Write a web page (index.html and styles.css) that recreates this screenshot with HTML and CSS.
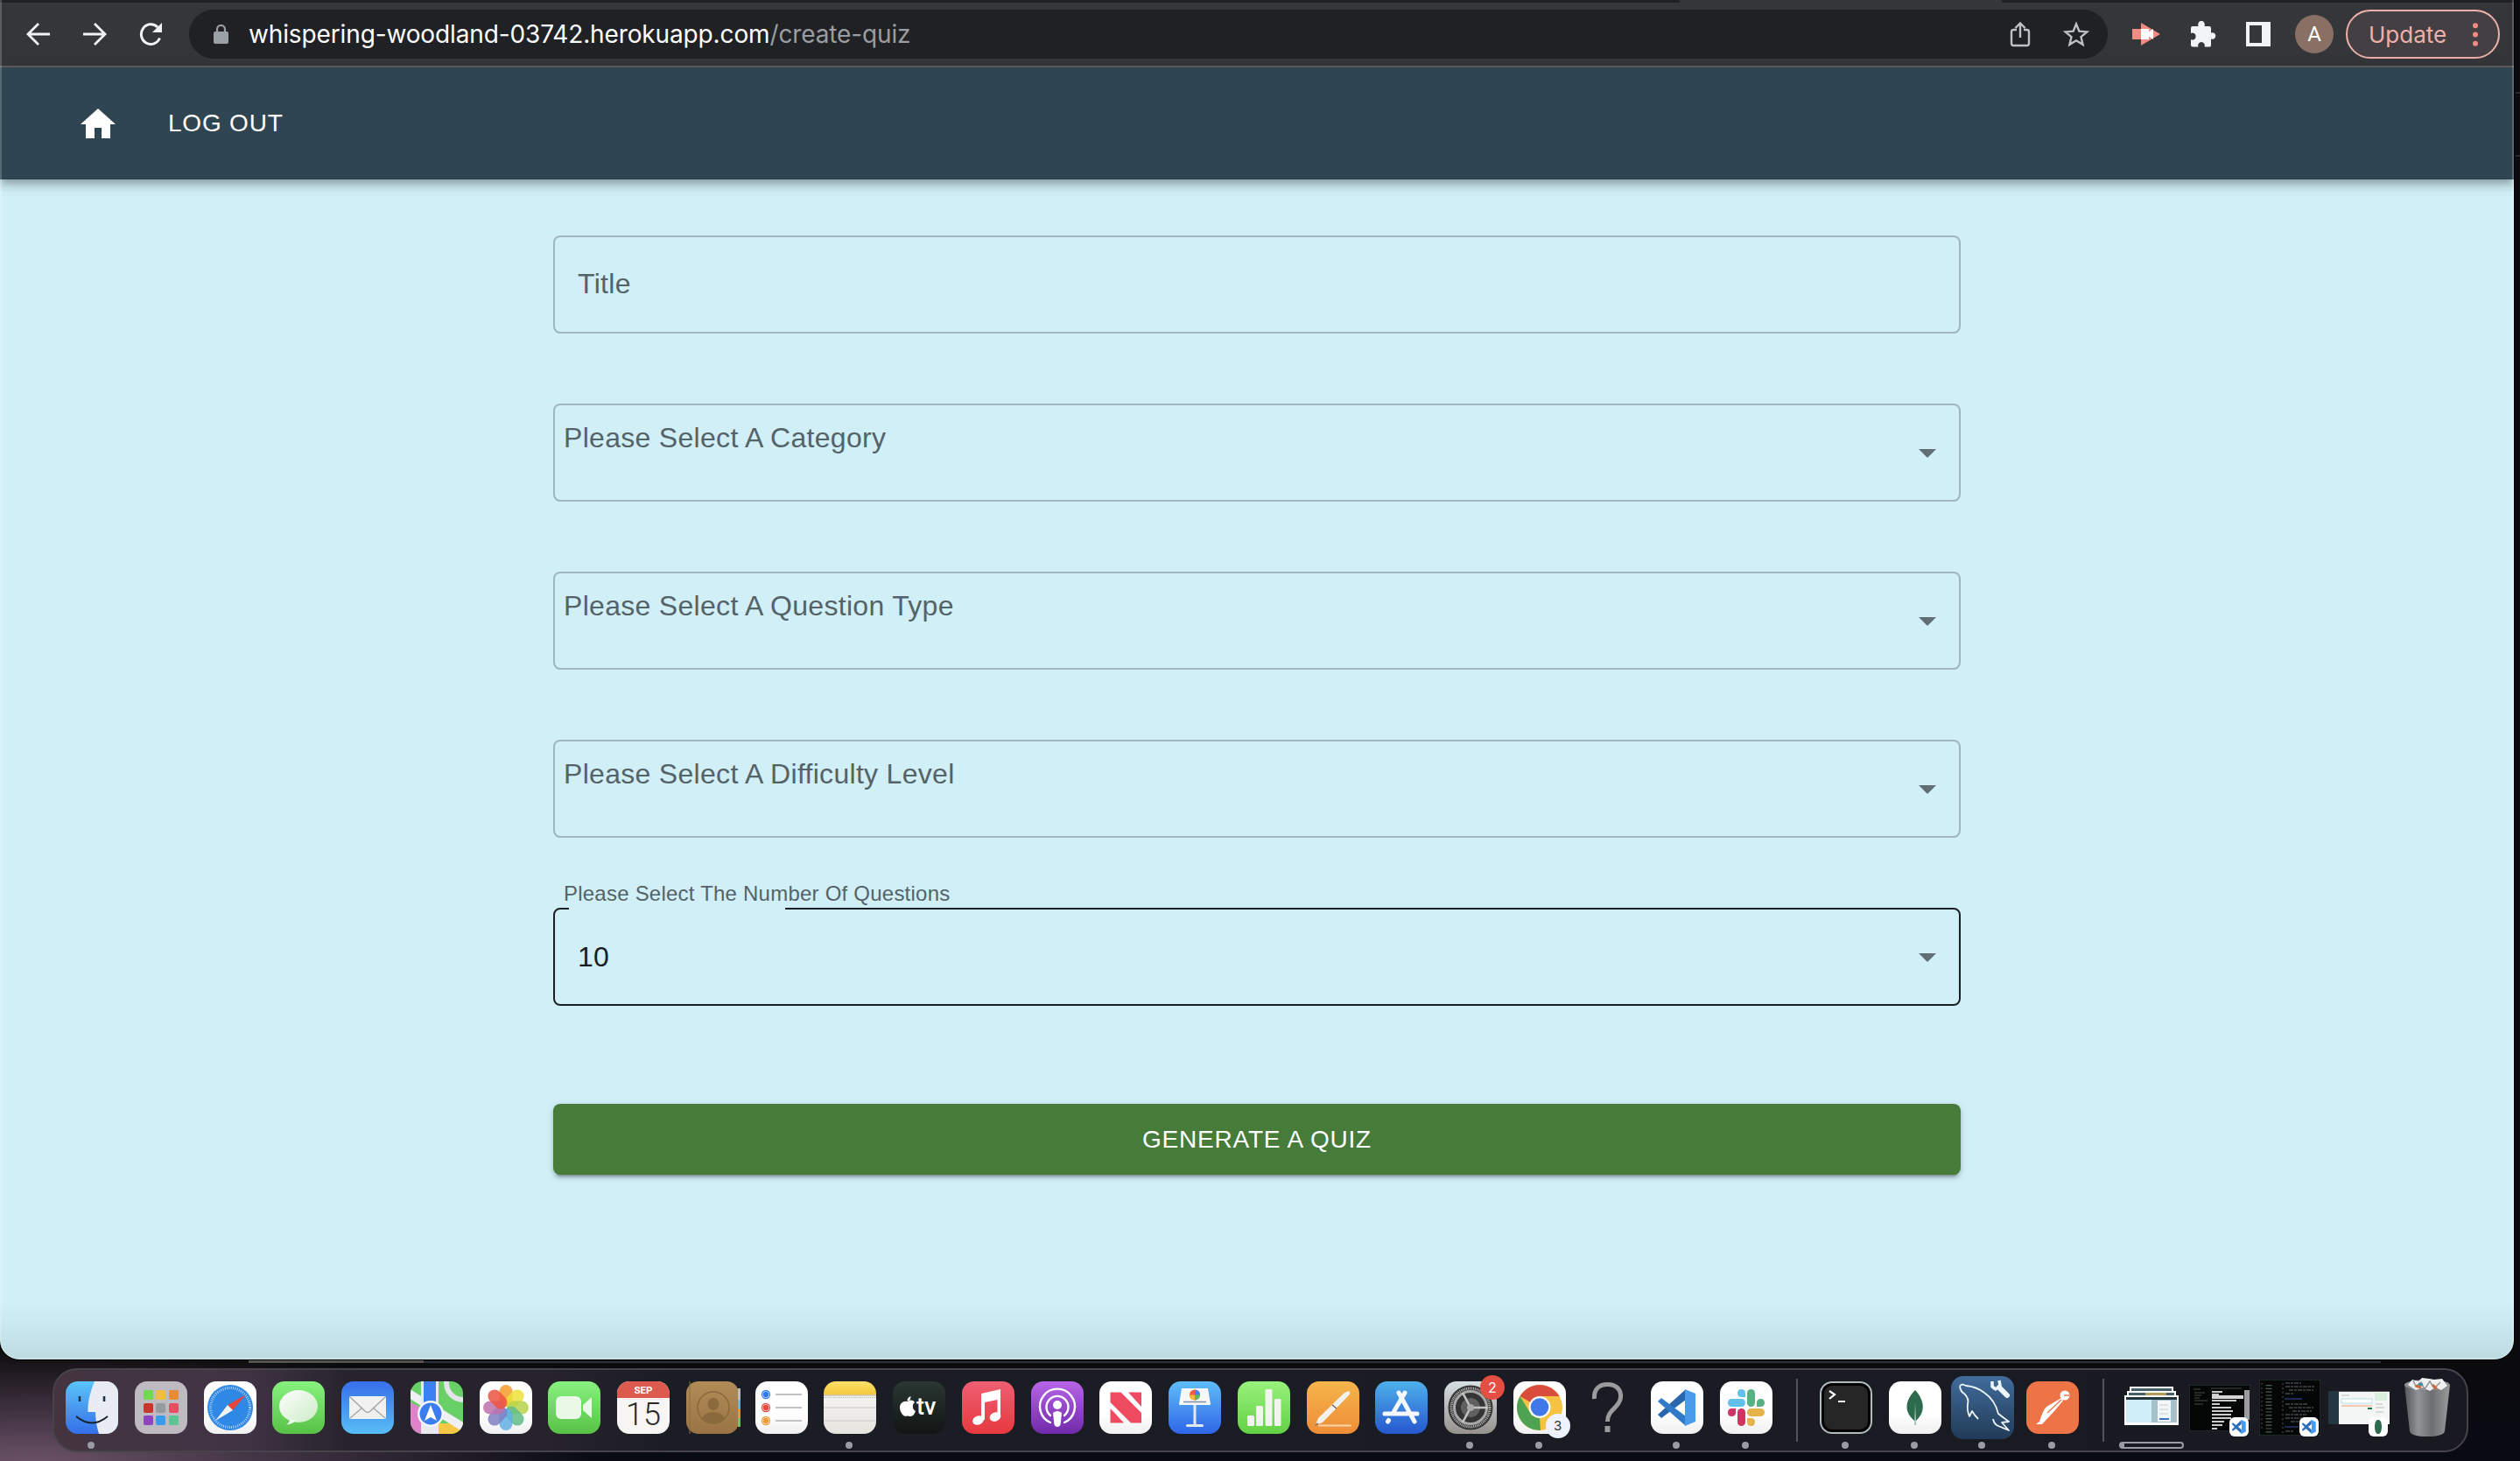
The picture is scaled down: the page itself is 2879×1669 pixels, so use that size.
FILE: index.html
```html
<!DOCTYPE html>
<html lang="en">
<head>
<meta charset="utf-8">
<title>Create Quiz</title>
<link rel="stylesheet" href="styles.css">
</head>
<body>
<div class="desktop">
  <div class="window">
    <div class="tabstrip"><span class="active-tab"></span></div>
    <div class="toolbar">
      <div class="nav-icons">
        <svg width="28" height="26" viewBox="0 0 28 26" fill="none" stroke="#f1f3f4" stroke-width="2.8"><path d="M27 13H2M14 1L2 13l12 12"/></svg>
        <svg width="28" height="26" viewBox="0 0 28 26" fill="none" stroke="#f1f3f4" stroke-width="2.8"><path d="M1 13h25M14 1l12 12-12 12"/></svg>
        <svg width="28" height="26" viewBox="0 0 28 26"><path d="M24.500 17.500A11 11.300 0 1 1 22 5" fill="none" stroke="#f1f3f4" stroke-width="3"/><path d="M27 0v11H16z" fill="#f1f3f4"/></svg>
      </div>
      <div class="omnibox">
        <svg width="17" height="22" viewBox="0 0 17 22"><rect y="8" width="17" height="14" rx="2" fill="#9aa0a6"/><path d="M4 9V5.500a4.500 4.500 0 0 1 9 0V9" fill="none" stroke="#9aa0a6" stroke-width="2.200"/></svg>
        <span class="url">whispering-woodland-03742.herokuapp.com<span class="path">/create-quiz</span></span>
        <svg class="share" width="24" height="30" viewBox="0 0 24 30" fill="none" stroke="#bdc1c6" stroke-width="2.400"><path d="M8 10H4.500Q2 10 2 12.500v13Q2 28 4.500 28h15q2.500 0 2.500-2.500v-13Q22 10 19.500 10H16M12 19V3M6.500 8L12 2.500 17.500 8"/></svg>
        <svg width="30" height="30" viewBox="0 0 30 30" fill="none" stroke="#bdc1c6" stroke-width="2.400"><path d="M15 3.500l3.400 8.200 8.900.7-6.800 5.800 2.100 8.700L15 22.300l-7.600 4.600 2.100-8.700-6.800-5.800 8.900-.7z"/></svg>
      </div>
      <div class="extensions">
        <svg width="32" height="28" viewBox="0 0 32 28"><path d="M0 8h10V1l22 13-22 13v-7H0z" fill="#f28b82"/><path d="M10 8h9v12h-9z" fill="#fff"/><path d="M18 12l6-4v12l-6-4z" fill="#fff"/></svg>
        <svg width="30" height="30" viewBox="0 0 30 30"><path d="M3 6h6.500a3.800 4.500 0 1 1 7 0H22q2 0 2 2v5.500a3.800 3.800 0 1 1 0 7V28q0 1.500-2 1.500h-5.500a3.800 4 0 1 0-7 0H3q-2 0-2-2V21a3.800 4 0 1 0 0-7V8q0-2 2-2z" fill="#f1f3f4"/></svg>
        <svg width="28" height="28" viewBox="0 0 28 28"><path fill-rule="evenodd" d="M0 0h28v28H0zM4 4v20h14V4z" fill="#f1f3f4"/></svg>
      </div>
      <span class="avatar">A</span>
      <div class="update"><span>Update</span><svg width="6" height="27" viewBox="0 0 6 27" fill="#f28b82"><circle cx="3" cy="3.200" r="3"/><circle cx="3" cy="13.500" r="3"/><circle cx="3" cy="23.800" r="3"/></svg></div>
    </div>

    <header class="appbar">
      <svg width="40" height="34" viewBox="2 3 20 17"><path d="M10 20v-6h4v6h5v-8h3L12 3 2 12h3v8z" fill="#fff"/></svg>
      <a class="logout">LOG OUT</a>
    </header>

    <main class="form">
      <div class="field title"><span class="label">Title</span></div>
      <div class="field"><span class="label">Please Select A Category</span><i class="arrow"></i></div>
      <div class="field"><span class="label">Please Select A Question Type</span><i class="arrow"></i></div>
      <div class="field"><span class="label">Please Select A Difficulty Level</span><i class="arrow"></i></div>
      <div class="field active"><span class="caption">Please Select The Number Of Questions</span><i class="notch"></i><span class="value">10</span><i class="arrow"></i></div>
      <button class="generate">GENERATE A QUIZ</button>
    </main>
  </div>

  <nav class="dock">
    <div class="cell running"><div class="tile finder"><svg viewBox="0 0 60 60"><path d="M33 0C28 12 25 24 25.500 35H34q0 12 4 25h22V0z" fill="#e9edf3"/><path d="M16 17v6M44 17v6" stroke="#17344c" stroke-width="2.600"/><path d="M12 40q18 15 36 0" fill="none" stroke="#182028" stroke-width="1.800"/></svg></div></div>
    <div class="cell"><div class="tile launchpad"><i></i><i></i><i></i><i></i><i></i><i></i><i></i><i></i><i></i></div></div>
    <div class="cell"><div class="tile white"><svg viewBox="0 0 60 60"><circle cx="30" cy="30" r="26" fill="#2f87e6"/><circle cx="30" cy="30" r="22.500" fill="none" stroke="#c8e3fb" stroke-width="3" stroke-dasharray=".8 1.560"/><path d="M48 15L27 27l6 6z" fill="#e8453c"/><path d="M13 45l14-18 6 6z" fill="#f2f4f6"/></svg></div></div>
    <div class="cell"><div class="tile green"><svg viewBox="0 0 60 60"><defs><linearGradient id="bubble" x2="1" y2="1"><stop stop-color="#fff"/><stop offset="1" stop-color="#c9ecc3"/></linearGradient></defs><ellipse cx="30" cy="28.500" rx="22" ry="18.500" fill="url(#bubble)"/><path d="M20 43q0 4-4 6.500 7-.5 11-5z" fill="#effbec"/></svg></div></div>
    <div class="cell"><div class="tile mail"><svg viewBox="0 0 60 60"><rect x="9" y="17" width="42" height="26" rx="2" fill="#f1f1f1"/><path d="M10 18l17 16q3 3 6 0l17-16M10 42l14-12M50 42L36 30" fill="none" stroke="#a4a4a4" stroke-width="1.300"/></svg></div></div>
    <div class="cell"><div class="tile maps"><svg viewBox="0 0 60 60"><path d="M0 24l18 10v26H0z" fill="#de83c9"/><path d="M32 48l28 0v12H32z" fill="#f6c846"/><path d="M-2 8l64 40v11L-2 19z" fill="#f0f0f4"/><path d="M12 0h20v60H12z" fill="#e9eaef"/><path d="M15 0h14v30H15z" fill="#3d80f2"/><circle cx="60" cy="2" r="19" fill="none" stroke="#e2e4e8" stroke-width="6"/><circle cx="23" cy="37" r="15" fill="#f4f5fa"/><circle cx="23" cy="37" r="12.500" fill="#3b7df0"/><path d="M23 27l7 18-7-4-7 4z" fill="#fff"/></svg></div></div>
    <div class="cell"><div class="tile white"><svg viewBox="0 0 60 60" fill-opacity=".85"><rect x="22.500" y="4" width="15" height="25" rx="7.500" fill="#f49b2a"/><rect x="22.500" y="4" width="15" height="25" rx="7.500" fill="#efe13b" transform="rotate(45 30 30)"/><rect x="22.500" y="4" width="15" height="25" rx="7.500" fill="#b7d44a" transform="rotate(90 30 30)"/><rect x="22.500" y="4" width="15" height="25" rx="7.500" fill="#62bd87" transform="rotate(135 30 30)"/><rect x="22.500" y="4" width="15" height="25" rx="7.500" fill="#62b0e4" transform="rotate(180 30 30)"/><rect x="22.500" y="4" width="15" height="25" rx="7.500" fill="#7f80c4" transform="rotate(225 30 30)"/><rect x="22.500" y="4" width="15" height="25" rx="7.500" fill="#bd71ac" transform="rotate(270 30 30)"/><rect x="22.500" y="4" width="15" height="25" rx="7.500" fill="#ec5340" transform="rotate(315 30 30)"/></svg></div></div>
    <div class="cell"><div class="tile green"><svg viewBox="0 0 60 60" fill="#eaf8e8"><rect x="9" y="17" width="29" height="26" rx="6"/><path d="M40 27l10-9v24l-10-9z"/></svg></div></div>
    <div class="cell"><div class="tile calendar"><b>SEP</b><span>15</span></div></div>
    <div class="cell"><div class="tile contacts"><svg viewBox="0 0 60 60"><path d="M4 0v60" stroke="#8a6a3c"/><circle cx="31" cy="30" r="18" fill="none" stroke="#8a6a3c" stroke-width="1.500"/><ellipse cx="31" cy="26" rx="6.500" ry="7" fill="#8a6a3c"/><path d="M18 42q4-7 13-7t13 7q-6 6-13 6t-13-6z" fill="#8a6a3c"/></svg><i class="tabs"></i></div></div>
    <div class="cell"><div class="tile white"><svg viewBox="0 0 60 60"><g stroke="#c2c2c2" stroke-width="1.800"><path d="M23 15h30M23 30h30M23 45h30"/></g><g fill="none" stroke-width="1.300"><circle cx="12" cy="15" r="4.500" stroke="#2e78f0"/><circle cx="12" cy="30" r="4.500" stroke="#e8483e"/><circle cx="12" cy="45" r="4.500" stroke="#ee9a35"/></g><circle cx="12" cy="15" r="3.200" fill="#2e78f0"/><circle cx="12" cy="30" r="3.200" fill="#e8483e"/><circle cx="12" cy="45" r="3.200" fill="#ee9a35"/></svg></div></div>
    <div class="cell running"><div class="tile notes"><svg viewBox="0 0 60 60"><path d="M0 16h60" stroke="#b2aea0"/><path d="M0 18.500h60" stroke="#aaa" stroke-dasharray="1 1.200"/><path d="M0 30h60M0 45h60" stroke="#d4d4d0" stroke-width="1.500"/></svg></div></div>
    <div class="cell"><div class="tile tv"><svg viewBox="0 0 60 60"><path d="M17 23c2-2 6-2 8 1-3 2-3 8 1 10-1 3-3 6-6 6-2 0-3-1-5 0-3 0-7-5-7-10s4-8 9-7zM16.500 22c0-2 1-4 4-5 0 3-1 5-4 5z" fill="#fff"/></svg><span>tv</span></div></div>
    <div class="cell"><div class="tile music"><svg viewBox="0 0 60 60" fill="#fff"><path d="M22 14l22-5v32h-3.500V21L26 24v20h-4z"/><ellipse cx="18.500" cy="44.500" rx="6.500" ry="5" transform="rotate(-20 18.500 44.500)"/><ellipse cx="38" cy="40.500" rx="6.500" ry="5" transform="rotate(-20 38 40.500)"/></svg></div></div>
    <div class="cell"><div class="tile podcasts"><svg viewBox="0 0 60 60"><g fill="none" stroke="#fff" stroke-width="2.400" stroke-linecap="round"><path d="M22 47a20 20 0 1 1 16 0"/><path d="M22 39a12.500 12.500 0 1 1 16 0"/></g><circle cx="30" cy="27" r="5" fill="#fff"/><path d="M25 36q5-4 10 0l-1.500 14q-3.500 4-7 0z" fill="#fff"/></svg></div></div>
    <div class="cell"><div class="tile white"><svg viewBox="0 0 60 60" fill="#ee4b60"><path d="M12.500 12.500h12L48 36v11.500H36L12.500 24zM33 12.500h15V29zM12.500 31v16.500H28z"/></svg></div></div>
    <div class="cell"><div class="tile keynote"><svg viewBox="0 0 60 60"><path d="M28.500 26h3v24h-3z" fill="#e4e9ef"/><rect x="20" y="49" width="20" height="3" rx="1.500" fill="#e4e9ef"/><path d="M15 8h30l3 18q0 1-1 1H13q-1 0-1-1z" fill="#f7f8fa"/><path d="M17 23.500h26" stroke="#7c8ca2" stroke-width="1.500"/><circle cx="30" cy="15.500" r="6" fill="#ee5a48"/><path d="M30 15.500v-6a6 6 0 0 1 6 6z" fill="#3c84e8"/><path d="M30 15.500h6a6 6 0 0 1-6 6z" fill="#54c057"/><path d="M30 15.500v6a6 6 0 0 1-6-6z" fill="#f5b838"/></svg></div></div>
    <div class="cell"><div class="tile numbers"><svg viewBox="0 0 60 60" fill="#f1f4ef"><rect x="11" y="39" width="8" height="12" rx="1.500"/><rect x="21" y="28" width="8" height="23" rx="1.500"/><rect x="31.500" y="9" width="8" height="42" rx="1.500"/><rect x="42" y="20" width="7.500" height="31" rx="1.500"/></svg></div></div>
    <div class="cell"><div class="tile pages"><svg viewBox="0 0 60 60"><path d="M14 50.500h36" stroke="#fbd6ab" stroke-width="2" stroke-linecap="round"/><path d="M10 50l3-8L43 13q5-3 6-1 1 2-3 6L18 47z" fill="#f3f1ee"/><path d="M29 27l5 4M10 50l3-2" stroke="#6d5b4b" stroke-width="1.300"/></svg></div></div>
    <div class="cell"><div class="tile appstore"><svg viewBox="0 0 60 60" fill="none" stroke="#f5f8ff" stroke-width="5" stroke-linecap="round"><path d="M34 13L20 37M27 13l18 33M11 37h37M15.500 44.500l-1 1.500"/></svg></div></div>
    <div class="cell running"><div class="tile settings"><svg viewBox="0 0 60 60"><circle cx="30" cy="30" r="25.500" fill="#343434"/><circle cx="30" cy="30" r="22" fill="none" stroke="#b9bab7" stroke-width="3" stroke-dasharray="1 1"/><circle cx="30" cy="30" r="18.500" fill="none" stroke="#a7a9a6" stroke-width="3"/><circle cx="30" cy="30" r="11" fill="#606060"/><path d="M31 30h19M30 30l-9-17M30 30l-9 17" stroke="#c2c4c1" stroke-width="2.600"/><circle cx="30" cy="30" r="4" fill="#a7a9a6"/></svg></div><b class="badge">2</b></div>
    <div class="cell running"><div class="tile white"><svg viewBox="0 0 60 60"><circle cx="30" cy="30" r="26" fill="#f5c242"/><path d="M30 30L7.500 17A26 26 0 0 1 52.500 17H30z" fill="#da4d3c"/><path d="M7.500 17L21 39l9 2 1 15A26 26 0 0 1 7.500 17z" fill="#4ea352"/><circle cx="30" cy="29.500" r="12.500" fill="#fff"/><circle cx="30" cy="29.500" r="10.300" fill="#4078ea"/></svg></div><b class="count">3</b></div>
    <div class="cell"><div class="tile question"><svg viewBox="0 0 60 60"><path d="M13.500 20C12.500 8 20 3.500 28.500 3.500c10 0 16 6 15 15-1 12-15 13-15 27.500" fill="none" stroke="#9b9b9d" stroke-width="5"/><path d="M25.500 51h6v7h-6z" fill="#9b9b9d"/></svg></div></div>
    <div class="cell running"><div class="tile white"><svg viewBox="0 0 60 60"><path d="M8 38l4 4 28-21V9z" fill="#2a66ad"/><path d="M8 23l4-4 28 21v11z" fill="#3179c9"/><path d="M39 9l12 5v32l-12 5z" fill="#4a9bea"/></svg></div></div>
    <div class="cell running"><div class="tile white"><svg viewBox="0 0 60 60"><g fill="#62c1ea"><rect x="9" y="20" width="20" height="9" rx="4.500"/><path d="M29 18h-5a4.500 4.500 0 1 1 5-5z"/></g><g fill="#56b183"><rect x="31" y="9" width="9" height="20" rx="4.500"/><path d="M42 29v-5a4.500 4.500 0 1 1 5 5z"/></g><g fill="#e4b34b"><rect x="31" y="31" width="20" height="9" rx="4.500"/><path d="M31 42h5a4.500 4.500 0 1 1-5 5z"/></g><g fill="#cf3462"><rect x="20" y="31" width="9" height="20" rx="4.500"/><path d="M18 31v5a4.500 4.500 0 1 1-5-5z"/></g></svg></div></div>
    <i class="divider"></i>
    <div class="cell running"><div class="tile terminal"><svg viewBox="0 0 60 60" fill="none" stroke="#fff" stroke-width="2.200"><path d="M11 11l6 4-6 5M21 23h8"/></svg></div></div>
    <div class="cell running"><div class="tile white"><svg viewBox="0 0 60 60"><path d="M30 10C18 22 17 35 29 45h2c11-10 10-23-1-35z" fill="#2c6b4d"/><path d="M30 24l1.300 26h-2.200z" fill="#a8c6b2"/></svg></div></div>
    <div class="cell running wide"><div class="tile mysql"><svg viewBox="0 0 72 72" fill="none" stroke="#edf5fb" stroke-width="1.800" stroke-linejoin="round"><path d="M10 12q1-4 7-1 12 1 21 8 12 8 16 24l12 9-8 1 8 9-12-5q-5-2-6-8"/><path d="M10 12q1 6 5 8 6 6 4 12-1 7 2 14l3-6q3 5 7 9"/><path d="M55 13l9 9" stroke-width="6" stroke-linecap="round"/><path d="M47 6v6l4 3 5-4-1-6" stroke-width="3.500"/></svg></div></div>
    <div class="cell running"><div class="tile postman"><svg viewBox="0 0 60 60"><circle cx="44" cy="16" r="5.500" fill="#fff"/><path d="M40 19L23 29q-4 4-8 17l-4 3h7l14-15 10-12z" fill="#fff"/><path d="M40 21L24 36M43 16h6" stroke="#ed7446" stroke-width="1.300"/></svg></div></div>
    <i class="divider second"></i>
    <div class="mini stack"><svg width="74" height="80" viewBox="0 0 74 80"><path d="M12 12h50v10H12z" fill="#fff"/><path d="M14 14h46v3H14z" fill="#46606a"/><path d="M9 17h56v8H9z" fill="#fff"/><path d="M11 19h52v3H11z" fill="#46606a"/><path d="M30 19h24v3H30z" fill="#b89a5c"/><path d="M6 22h62v34H6z" fill="#fff"/><path d="M8 24h58v3H8z" fill="#20363c"/><path d="M8 27h29v26H8z" fill="#cfeef7"/><path d="M37 27h29v26H37z" fill="#a5c0c9"/><path d="M44 28h15v24H44z" fill="#f4f7f9"/><path d="M46 33h10M46 38h10M46 43h10" stroke="#c6cdd2"/><path d="M46 49h11" stroke="#3c72c0" stroke-width="2"/></svg><i class="progress"></i></div>
    <div class="mini editor"><svg width="70" height="53" viewBox="0 0 70 53"><path d="M0 0h70v53H0z" fill="#050606" stroke="#2f484b"/><path d="M5 5h8M6 9h12M6 12h8M6 15h6M6 18h15M6 22h10" stroke="#51605e" stroke-width=".8"/><path d="M25 4h35" stroke="#444"/><path d="M26 8h12M26 11h8M26 18h28M26 22h9M26 26h22M26 30h24M26 34h22M26 38h22M26 42h14M26 46h12M26 50h6" stroke="#ccc" stroke-width="2"/><path d="M26 14h36" stroke="#d5d5d5" stroke-width="4"/><path d="M63 6h6v34h-6z" fill="#9b9ba0"/></svg><span class="app code"></span></div>
    <div class="mini editor tall"><svg width="70" height="64" viewBox="0 0 70 64"><path d="M0 0h70v64H0z" fill="#050606" stroke="#2f484b"/><path d="M3 4v54" stroke="#555" stroke-dasharray="2 3"/><path d="M11 6v56" stroke="#4d5d59" stroke-width="7" stroke-dasharray="1.200 2.600"/><path d="M27 4v58" stroke="#555" stroke-dasharray="2 3"/><path d="M30 4h18M30 8h33M34 12h28M30 16h10M30 28h26M34 32h28M38 36h22M30 40h24M30 44h34M36 48h14M30 59h10" stroke="#63656a" stroke-dasharray="5 1 3 1"/><path d="M29 22h20M29 54h16" stroke="#364fa0"/></svg><span class="app code"></span></div>
    <div class="mini page"><svg width="70" height="38" viewBox="0 0 70 38"><path d="M0 0h70v38H0z" fill="#f4f6f6"/><path d="M0 0h70v1H0z" fill="#555"/><path d="M0 0h12v38H0z" fill="#243642"/><path d="M15 9h35v5H15z" fill="#fff" stroke="#b5ddeb"/><path d="M15 5h9M54 15h8M54 19h10M54 24h9" stroke="#b9bdbd"/><path d="M53 2h14v9H53z" fill="#daf0df"/><path d="M15 17h35" stroke="#f4c8b3" stroke-width="2"/><path d="M45 20h5" stroke="#217448" stroke-width="2"/></svg><span class="app leaf"></span></div>
    <div class="mini trash"><svg width="54" height="70" viewBox="0 0 54 70"><defs><linearGradient id="bin" x2="1"><stop stop-color="#555659"/><stop offset=".3" stop-color="#929396"/><stop offset=".6" stop-color="#6d6e70"/><stop offset="1" stop-color="#9a9b9d"/></linearGradient></defs><path d="M1 9l6 53q2 6 20 6t20-6l6-53z" fill="url(#bin)"/><ellipse cx="27" cy="9" rx="26" ry="6" fill="#8f9092"/><path d="M5 9l5-6 7 2 4-4 8 1 6 1 9-1 6 8-7 5-7-3-6 4-8-4-8 3z" fill="#eef0f0"/><path d="M11 4l3 7 6-5 4 8 6-9 5 8 7-7" fill="none" stroke="#8f9698" stroke-width="1.500"/><path d="M14 10l6 2M33 9l5 5" stroke="#ca6b39" stroke-width="3"/><path d="M17 8l5 1" stroke="#3e8ea8" stroke-width="3"/></svg></div>
  </nav>
</div>
</body>
</html>
```
FILE: styles.css
```css
* { box-sizing: border-box; }
body { margin: 0; font-family: "Liberation Sans", Arial, sans-serif; }
svg { display: block; flex: none; }

.desktop {
  width: 2879px;
  height: 1669px;
  overflow: hidden;
  background:
    linear-gradient(#26272a 0 0) 2874px 105px / 5px 2px no-repeat,
    linear-gradient(#26272a 0 0) 2874px 177px / 5px 2px no-repeat,
    linear-gradient(#55534f 0 0) 284px 1554px / 200px 3px no-repeat,
    linear-gradient(#26333d 0 0) 484px 1555px / 2236px 2px no-repeat,
    radial-gradient(ellipse 640px 130px at 40px 1669px, #6a5166, transparent),
    linear-gradient(#0b0b0d 0 1560px, #090b14 1660px);
}

/* browser window */
.window {
  position: relative;
  width: 2872px;
  height: 1553px;
  border-radius: 0 0 22px 22px;
  overflow: hidden;
  background: linear-gradient(#d1eff7 0 1490px, #bddbe1 1551px);
  box-shadow: 0 0 0 1px #000;
}
.window::after {
  content: "";
  position: absolute;
  inset: 0;
  border: solid rgba(255, 255, 255, .2);
  border-width: 0 2px 2px 2px;
  border-radius: 0 0 22px 22px;
}
.tabstrip { height: 3px; background: #202124; padding-left: 1919px; }
.active-tab { display: block; width: 368px; height: 3px; background: #35363a; }
.toolbar {
  display: flex;
  align-items: center;
  height: 74px;
  background: #35363a;
  border-bottom: 2px solid #625c61;
  padding-left: 30px;
}
.nav-icons { display: flex; gap: 36px; width: 186px; }
.omnibox {
  display: flex;
  align-items: center;
  width: 2192px;
  height: 56px;
  border-radius: 28px;
  background: #202124;
  padding: 0 21px 0 28px;
}
.url {
  margin-left: 23px;
  font-family: Inter, sans-serif;
  font-size: 28px;
  letter-spacing: -.13px;
  color: #fff;
  white-space: nowrap;
}
.path { color: #9a9da1; }
.share { margin-left: auto; margin-right: 37px; }
.extensions { display: flex; align-items: center; gap: 34px; margin-left: 28px; width: 186px; }
.avatar {
  width: 44px;
  height: 44px;
  border-radius: 50%;
  background: #8a6f64;
  color: #fff;
  font: 24px/44px Roboto, sans-serif;
  text-align: center;
}
.update {
  display: flex;
  align-items: center;
  justify-content: space-between;
  width: 176px;
  height: 56px;
  margin-left: 14px;
  padding: 0 23px 0 24px;
  border: 2px solid #eeb0aa;
  border-radius: 28px;
  background: #443f42;
  color: #eeb0aa;
  font: 26px Inter, sans-serif;
}

/* app header */
.appbar {
  position: relative;
  display: flex;
  align-items: center;
  height: 128px;
  padding-left: 92px;
  background: #2f4552;
  color: #fff;
  box-shadow: 0 4px 8px -2px rgba(0,0,0,.2), 0 8px 10px rgba(0,0,0,.14), 0 2px 20px rgba(0,0,0,.12);
}
.logout { margin-left: 60px; font-size: 28px; letter-spacing: .8px; }

/* form */
.form {
  display: flex;
  flex-direction: column;
  gap: 80px;
  width: 1608px;
  margin: 64px 0 0 632px;
}
.field {
  position: relative;
  display: flex;
  justify-content: space-between;
  height: 112px;
  padding: 17px 26px 0 10px;
  border: 2px solid #9fb6bc;
  border-radius: 8px;
  color: #546367;
  font-size: 32px;
  letter-spacing: .3px;
  line-height: 40px;
}
.title { padding: 33px 26px 0 26px; }
.arrow {
  width: 20px;
  height: 10px;
  margin-top: 33px;
  background: #5f6f73;
  clip-path: polygon(0 0, 100% 0, 50% 100%);
}
.active { border-color: #1a2022; padding: 34px 26px 0; }
.active .arrow { margin-top: 16px; }
.value { color: #1a2022; }
.caption { position: absolute; left: 10px; top: -34px; font-size: 24px; letter-spacing: .225px; line-height: 32px; }
.notch { position: absolute; left: 16px; top: -2px; width: 247px; height: 2px; background: #d1eff7; }
.generate {
  height: 81px;
  margin-top: 32px;
  border: 0;
  border-radius: 8px;
  background: #467b3a;
  color: #fff;
  font: 28px "Liberation Sans", Arial, sans-serif;
  letter-spacing: .8px;
  box-shadow: 0 6px 2px -4px rgba(0,0,0,.2), 0 4px 4px rgba(0,0,0,.14), 0 2px 10px rgba(0,0,0,.12);
}

/* dock */
.dock {
  display: flex;
  width: 2760px;
  height: 96px;
  margin: 10px 0 0 60px;
  padding: 13px 0 0 13px;
  border: 2px solid #47434b;
  border-radius: 28px;
  background: linear-gradient(90deg, #443440 0, #403344 220px, #26232c 340px, #27232d 560px, #1b1d25 700px, #191a21);
}
.cell { position: relative; flex: none; width: 78.75px; height: 60px; }
.tile { position: relative; width: 60px; height: 60px; border-radius: 14px; overflow: hidden; }
.tile svg { width: 100%; height: 100%; }
.running::after {
  content: "";
  position: absolute;
  left: 25px;
  top: 69px;
  width: 8px;
  height: 8px;
  border-radius: 50%;
  background: #9b9ba5;
}
.white { background: linear-gradient(#fff 60%, #f0f0f0); }
.green { background: linear-gradient(#86f27e, #57c245); }
.finder { background: linear-gradient(#5ac4f8, #356fe9); }
.launchpad {
  display: grid;
  grid-template-columns: repeat(3, 11px);
  gap: 3.5px;
  justify-content: center;
  align-content: center;
  background: #bdbac1;
}
.launchpad i { height: 11px; border-radius: 2px; background: #6fd950; }
.launchpad i:nth-child(2) { background: #f0bd42; }
.launchpad i:nth-child(3) { background: #e88b35; }
.launchpad i:nth-child(4) { background: #c8352b; }
.launchpad i:nth-child(5) { background: #969ba0; }
.launchpad i:nth-child(6) { background: #e64e62; }
.launchpad i:nth-child(7) { background: #8f43c0; }
.launchpad i:nth-child(8) { background: #3b9bea; }
.launchpad i:nth-child(9) { background: #5dc493; }
.mail { background: linear-gradient(#376fe9, #58bdf7); }
.maps { background: #68d067; }
.calendar { background: #f7f6f4; text-align: center; }
.calendar b { display: block; height: 19px; background: #dd5a4e; color: #fff; font: bold 11.500px/20px Roboto, sans-serif; }
.calendar span { display: block; color: #292929; font: 300 36px/38px Roboto, sans-serif; }
.contacts { overflow: visible; background: linear-gradient(#b08c57, #9a7444); }
.tabs {
  position: absolute;
  left: 59px;
  top: 8px;
  width: 3px;
  height: 44px;
  background: linear-gradient(#bbb 0 13px, #60b5e9 13px 24px, #ed9334 24px 34px, #60cc5c 34px);
}
.notes { background: linear-gradient(#fae06b, #f4c93b 15px, #f4f3f0 16px, #e5e4df); }
.tv { background: linear-gradient(#2a3733, #111414); }
.tv span { position: absolute; left: 27px; top: 13px; color: #fff; font: 500 27px/32px Roboto, sans-serif; }
.music { background: linear-gradient(#ee5f73, #e7393f); }
.podcasts { background: linear-gradient(#b964e8, #6f2aa9); }
.keynote { background: linear-gradient(#5ebdf8, #2f66e8); }
.numbers { background: linear-gradient(#98f17b, #62d144); }
.pages { background: linear-gradient(#f5b54a, #ee8d38); }
.appstore { background: linear-gradient(#4eb0ec, #2657cf); }
.settings { background: linear-gradient(#d7dfe4, #96928d); }
.question { overflow: visible; }
.badge, .count { position: absolute; border-radius: 50%; text-align: center; }
.badge { left: 41px; top: -7px; width: 28px; height: 28px; background: #e44e43; color: #fff; font: 16px/28px Inter, sans-serif; }
.count { left: 37px; top: 37px; width: 28px; height: 28px; background: #edf3fe; color: #333; font: 15px/28px Inter, sans-serif; z-index: 1; }
.divider { flex: none; width: 2px; height: 72px; margin: -3px 25px 0 8px; background: #52535a; }
.terminal { overflow: visible; background: #262626; border: 5px solid #000; outline: 2px solid #b0bcc0; outline-offset: -2px; }
.terminal svg { width: 60px; height: 60px; margin: -5px; }
.wide .tile { width: 72px; height: 72px; margin: -6px 0 0 -7px; background: linear-gradient(#416c9b, #213b57); }
.wide::after { left: 24px; }
.postman { background: #ed7446; }
.second { margin: -3px 17px 0 8px; }
.mini { position: relative; flex: none; height: 74px; }
.stack { width: 80px; }
.stack svg { margin-top: -6px; }
.progress {
  position: absolute;
  left: 0;
  top: 69px;
  width: 74px;
  height: 8px;
  border: 2px solid #9b9ba5;
  border-left-width: 6px;
  border-radius: 4px;
}
.editor { width: 80px; padding-top: 4px; }
.tall { padding-top: 0; margin-top: -2px; height: 76px; }
.page { width: 86px; padding-top: 11px; margin-left: -1px; }
.app { position: absolute; left: 46px; top: 41px; width: 22px; height: 22px; border-radius: 6px; background: #fff; }
.tall .app { top: 43px; }
.app::before { content: ""; position: absolute; }
.code::before {
  inset: 3px;
  background: linear-gradient(90deg, #2b6db8 65%, #4a9bea 65%);
  clip-path: polygon(70% 0, 100% 15%, 100% 85%, 70% 100%, 30% 63%, 8% 80%, 0 70%, 20% 50%, 0 30%, 8% 20%, 30% 37%, 70% 0, 70% 30%, 45% 50%, 70% 70%);
}
.leaf::before { left: 7px; top: 3px; width: 8px; height: 16px; border-radius: 50% / 60%; background: #2c6b4d; }
.trash { margin-top: -5px; }
```
